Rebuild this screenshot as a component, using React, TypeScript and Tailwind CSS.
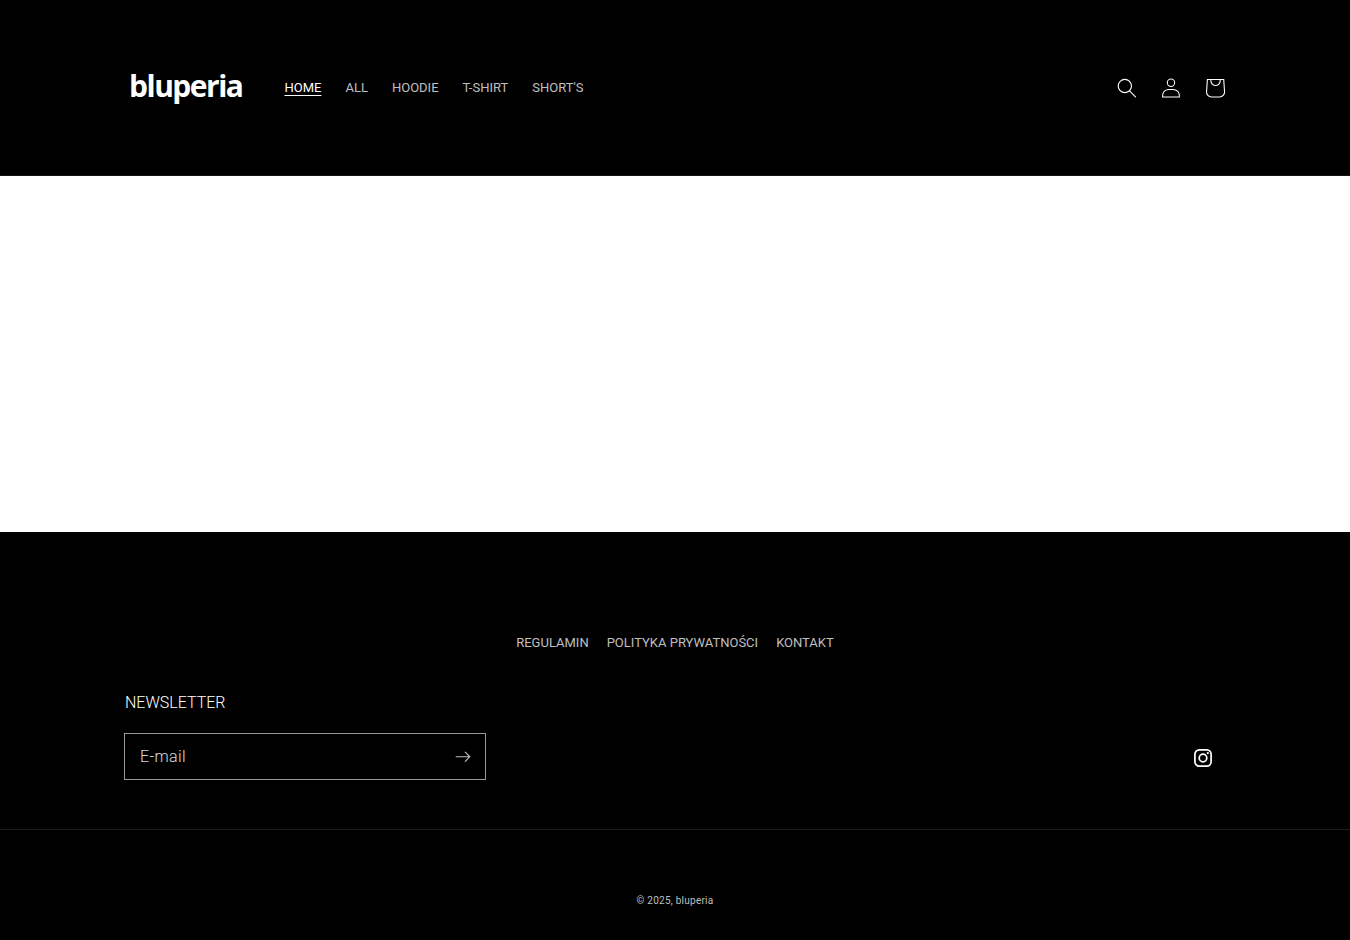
import type { ReactNode } from "react";

const nav = [
  { href: "#home", label: "HOME", active: true },
  { href: "#all", label: "ALL" },
  { href: "#hoodie", label: "HOODIE" },
  { href: "#t-shirt", label: "T-SHIRT" },
  { href: "#shorts", label: "SHORT'S" },
];

const footerLinks = [
  { href: "#regulamin", label: "REGULAMIN" },
  { href: "#polityka", label: "POLITYKA PRYWATNOŚCI" },
  { href: "#kontakt", label: "KONTAKT" },
];

function SearchIcon() {
  return (
    <svg viewBox="0 0 18 19" className="h-5 w-5" fill="none" aria-hidden="true">
      <path
        fill="currentColor"
        fillRule="evenodd"
        clipRule="evenodd"
        d="M11.03 11.68A5.784 5.784 0 112.85 3.5a5.784 5.784 0 018.18 8.18zm.26 1.12a6.78 6.78 0 11.72-.7l5.4 5.4a.5.5 0 11-.71.7l-5.41-5.4z"
      />
    </svg>
  );
}

function AccountIcon() {
  return (
    <svg viewBox="0 0 18 19" className="h-5 w-5" fill="none" aria-hidden="true">
      <path
        fill="currentColor"
        fillRule="evenodd"
        clipRule="evenodd"
        d="M6 4.5a3 3 0 116 0 3 3 0 01-6 0zm3-4a4 4 0 100 8 4 4 0 000-8zm5.58 12.15c1.12.82 1.83 2.24 1.91 4.85H1.51c.08-2.6.79-4.03 1.9-4.85C4.66 11.75 6.5 11.5 9 11.5s4.35.26 5.58 1.15zM9 10.5c-2.5 0-4.65.24-6.17 1.35C1.27 12.98.5 14.93.5 18v.5h17V18c0-3.07-.77-5.02-2.33-6.15-1.52-1.1-3.67-1.35-6.17-1.35z"
      />
    </svg>
  );
}

function CartIcon() {
  return (
    <svg viewBox="0 0 40 40" className="h-11 w-11" fill="none" aria-hidden="true">
      <path
        fill="currentColor"
        fillRule="evenodd"
        d="M15.75 11.8h-3.16l-.77 11.6a5 5 0 0 0 4.99 5.34h7.38a5 5 0 0 0 4.99-5.33L28.4 11.8zm0 1h-2.22l-.71 10.67a4 4 0 0 0 3.99 4.27h7.38a4 4 0 0 0 4-4.27l-.72-10.67h-2.22v.63a4.75 4.75 0 1 1-9.5 0zm8.5 0h-7.5v.63a3.75 3.75 0 1 0 7.5 0z"
      />
    </svg>
  );
}

function ArrowIcon() {
  return (
    <svg viewBox="0 0 14 10" className="w-4" fill="none" aria-hidden="true">
      <path
        fill="currentColor"
        fillRule="evenodd"
        clipRule="evenodd"
        d="M8.537.808a.5.5 0 01.817-.162l4 4a.5.5 0 010 .708l-4 4a.5.5 0 11-.708-.708L11.793 5.5H1a.5.5 0 010-1h10.793L8.646 1.354a.5.5 0 01-.109-.546z"
      />
    </svg>
  );
}

function InstagramIcon() {
  return (
    <svg viewBox="0 0 18 18" className="h-[18px] w-[18px]" fill="none" aria-hidden="true">
      <rect x="0.9" y="0.9" width="16.2" height="16.2" rx="4.4" stroke="currentColor" strokeWidth="1.7" />
      <circle cx="9" cy="9" r="3.8" stroke="currentColor" strokeWidth="1.7" />
      <circle cx="13.8" cy="4.2" r="1.1" fill="currentColor" />
    </svg>
  );
}

function IconLink({ href, label, children }: { href: string; label: string; children: ReactNode }) {
  return (
    <a href={href} aria-label={label} className="grid h-11 w-11 place-content-center">
      {children}
    </a>
  );
}

export default function App() {
  return (
    <div className="min-h-screen bg-black font-[Roboto,sans-serif] text-white">
      <header className="border-b border-[#141414]">
        <div className="mx-auto flex max-w-[1200px] items-center px-[50px] pt-[66px] pb-[65px]">
          <a
            href="#home"
            className="px-1 pb-1 font-['Open_Sans',sans-serif] text-[30px] leading-10 font-bold tracking-tighter"
          >
            bluperia
          </a>
          <nav className="ml-[26px] flex flex-1">
            {nav.map(({ href, label, active }) => (
              <a
                key={href}
                href={href}
                className={`px-3 py-3 text-[13px] leading-5 ${
                  active ? "text-white underline underline-offset-3" : "text-white/75"
                }`}
              >
                {label}
              </a>
            ))}
          </nav>
          <div className="-mr-3 flex">
            <IconLink href="#search" label="Szukaj">
              <SearchIcon />
            </IconLink>
            <IconLink href="#account" label="Zaloguj się">
              <AccountIcon />
            </IconLink>
            <IconLink href="#cart" label="Koszyk">
              <CartIcon />
            </IconLink>
          </div>
        </div>
      </header>

      <main className="h-[356px] bg-white" />

      <footer className="pt-[101px]">
        <div className="mx-auto max-w-[1200px] px-[50px]">
          <nav className="flex justify-center gap-[18px]">
            {footerLinks.map(({ href, label }) => (
              <a key={href} href={href} className="text-[13px] leading-5 text-white/75">
                {label}
              </a>
            ))}
          </nav>
          <div className="mt-9 flex items-end justify-between pb-[49px]">
            <form className="-ml-px w-[362px]" onSubmit={(e) => e.preventDefault()}>
              <label htmlFor="email" className="block pl-px text-base leading-7 font-light text-white">
                NEWSLETTER
              </label>
              <div className="mt-4 flex h-[47px] border border-white/60">
                <input
                  id="email"
                  type="email"
                  placeholder="E-mail"
                  className="min-w-0 flex-1 bg-transparent pl-[15px] text-base font-light tracking-wide outline-none placeholder:text-white/85"
                />
                <button type="submit" aria-label="Subskrybuj" className="grid w-11 place-content-center text-white/75">
                  <ArrowIcon />
                </button>
              </div>
            </form>
            <IconLink href="#instagram" label="Instagram">
              <InstagramIcon />
            </IconLink>
          </div>
        </div>
        <div className="border-t border-[#1c1c1c] pt-[61px] pb-8 text-center leading-4 text-white/75">
          <small className="text-[10px] tracking-wide">
            © 2025, <a href="#home">bluperia</a>
          </small>
        </div>
      </footer>
    </div>
  );
}
